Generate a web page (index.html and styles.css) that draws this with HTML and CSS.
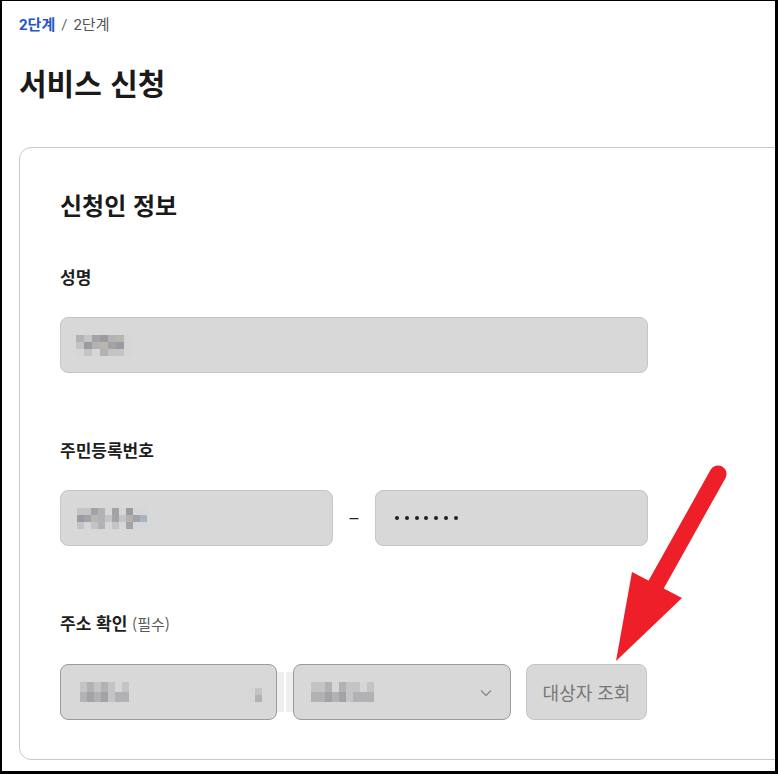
FILE: index.html
```html
<!DOCTYPE html>
<html lang="ko">
<head>
<meta charset="utf-8">
<title>서비스 신청</title>
<link rel="stylesheet" href="styles.css">
</head>
<body>
<div class="frame">
  <nav class="crumbs"><span class="crumb-current">2단계</span><span class="crumb-sep">/</span><span class="crumb">2단계</span></nav>
  <h1 class="title">서비스 신청</h1>
  <section class="card">
    <h2 class="card-title">신청인 정보</h2>

    <div class="field">
      <div class="label">성명</div>
      <div class="input input-full">
        <div class="mosaic m-name">
          <i class="c2"></i><i class="c1"></i><i class="c3"></i><i class="c4"></i><i class="c2"></i><i class="c5"></i><i class="c0"></i>
          <i class="c1"></i><i class="c4"></i><i class="c2"></i><i class="c5"></i><i class="c3"></i><i class="c4"></i><i class="c0"></i>
          <i class="c0"></i><i class="c1"></i><i class="c0"></i><i class="c2"></i><i class="c1"></i><i class="c1"></i><i class="c0"></i>
        </div>
      </div>
    </div>

    <div class="field">
      <div class="label">주민등록번호</div>
      <div class="row">
        <div class="input input-half">
          <div class="mosaic m-rrn">
            <i class="c1"></i><i class="c1"></i><i class="c3"></i><i class="c2"></i><i class="c0"></i><i class="c3"></i><i class="c0"></i><i class="c4"></i><i class="c0"></i><i class="c0"></i>
            <i class="c4"></i><i class="c3"></i><i class="c5"></i><i class="c2"></i><i class="c1"></i><i class="c3"></i><i class="c1"></i><i class="c2"></i><i class="c3"></i><i class="c6"></i>
            <i class="c1"></i><i class="c0"></i><i class="c1"></i><i class="c2"></i><i class="c0"></i><i class="c1"></i><i class="c0"></i><i class="c3"></i><i class="c0"></i><i class="c0"></i>
          </div>
        </div>
        <div class="dash">–</div>
        <div class="input input-half">
          <div class="dots"><i></i><i></i><i></i><i></i><i></i><i></i><i></i></div>
        </div>
      </div>
    </div>

    <div class="field">
      <div class="label">주소 확인 <span class="req">(필수)</span></div>
      <div class="row">
        <div class="input select select-a">
          <div class="mosaic m-sel1">
            <i class="c1"></i><i class="c2"></i><i class="c1"></i><i class="c2"></i><i class="c1"></i><i class="c0"></i><i class="c1"></i>
            <i class="c2"></i><i class="c3"></i><i class="c2"></i><i class="c3"></i><i class="c1"></i><i class="c2"></i><i class="c2"></i>
          </div>
          <div class="mosaic m-tail"><i class="c0"></i><i class="c1"></i><i class="c0"></i><i class="c2"></i></div>
        </div>
        <div class="spacer"><span></span><span></span></div>
        <div class="input select select-b">
          <div class="mosaic m-sel2">
            <i class="c1"></i><i class="c1"></i><i class="c2"></i><i class="c0"></i><i class="c2"></i><i class="c1"></i><i class="c1"></i><i class="c0"></i><i class="c1"></i>
            <i class="c2"></i><i class="c2"></i><i class="c3"></i><i class="c2"></i><i class="c3"></i><i class="c1"></i><i class="c2"></i><i class="c2"></i><i class="c2"></i>
          </div>
          <svg class="chev" width="12" height="8" viewBox="0 0 12 8"><path d="M1 1.5 L6 6.5 L11 1.5" fill="none" stroke="#8a8a8a" stroke-width="1.3"/></svg>
        </div>
        <button class="btn">대상자 조회</button>
      </div>
    </div>
  </section>

  <svg class="arrow" width="778" height="774" viewBox="0 0 778 774">
    <line x1="718" y1="474" x2="652" y2="592" stroke="#ee1f28" stroke-width="17" stroke-linecap="round"/>
    <polygon points="616,661 632,572 682,598" fill="#ee1f28"/>
  </svg>
</div>
</body>
</html>
```

FILE: styles.css
```css
html, body {
  margin: 0;
  padding: 0;
  background: #fff;
}

.frame {
  position: relative;
  width: 778px;
  height: 774px;
  box-sizing: border-box;
  border-style: solid;
  border-color: #000;
  border-width: 1px 3px 3px 2px;
  overflow: hidden;
  background: #fff;
  padding: 13px 0 0 17px;
  font-family: "Noto Sans CJK KR", "Noto Sans", sans-serif;
  color: #1e1e1e;
}

.crumbs {
  display: flex;
  align-items: center;
  height: 22px;
  font-size: 15px;
  line-height: 22px;
  font-family: "Roboto", "Noto Sans CJK KR", sans-serif;
}

.crumb-current {
  color: #2356c7;
  font-weight: 700;
}

.crumb-sep {
  color: #666;
  margin: 0 6px;
}

.crumb {
  color: #555;
}

.title {
  margin: 24px 0 0;
  font-size: 30px;
  line-height: 44px;
  font-weight: 700;
  color: #1a1a1a;
}

.card {
  margin-top: 43px;
  width: 800px;
  height: 613px;
  box-sizing: border-box;
  border: 1px solid #c9c9c9;
  border-radius: 12px;
  padding: 40px 0 0 40px;
  display: flex;
  flex-direction: column;
}

.card-title {
  margin: 0;
  font-size: 24px;
  line-height: 34px;
  font-weight: 700;
  color: #1a1a1a;
}

.field {
  margin-top: 43px;
  display: flex;
  flex-direction: column;
  gap: 28px;
}

.field + .field {
  margin-top: 65px;
}

.label {
  font-size: 17px;
  line-height: 24px;
  font-weight: 700;
  color: #1e1e1e;
}

.req {
  font-size: 15px;
  font-weight: 400;
  color: #5a5a5a;
}

.row {
  display: flex;
  align-items: center;
}

.input {
  box-sizing: border-box;
  height: 56px;
  background: #d8d8d8;
  border: 1px solid #c6c6c6;
  border-radius: 8px;
  display: flex;
  align-items: center;
  position: relative;
}

.input-full {
  width: 588px;
  padding-left: 15px;
}

.input-half {
  width: 273px;
  padding-left: 16px;
}

.dash {
  width: 42px;
  text-align: center;
  font-family: "Liberation Sans", sans-serif;
  font-size: 16px;
  line-height: 20px;
  color: #222;
}

.dots {
  display: flex;
  gap: 5.8px;
  margin-left: 3px;
}

.dots i {
  display: block;
  width: 4px;
  height: 4px;
  border-radius: 50%;
  background: #222;
}

.select {
  border-color: #9c9c9c;
}

.select-a {
  width: 217px;
  padding-left: 19px;
}

.select-b {
  width: 218px;
  padding-left: 17px;
}

.spacer {
  width: 16px;
  height: 40px;
  display: flex;
  justify-content: space-between;
}

.spacer span {
  display: block;
  width: 7px;
  height: 40px;
  background: #efefef;
}

.chev {
  position: absolute;
  right: 18px;
  top: 24px;
}

.btn {
  margin-left: 15px;
  width: 121px;
  height: 56px;
  box-sizing: border-box;
  background: #d8d8d8;
  border: 1px solid #c6c6c6;
  border-radius: 8px;
  font-family: "Noto Sans CJK KR", "Noto Sans", sans-serif;
  font-size: 18px;
  color: #777;
  padding: 0;
}

.mosaic {
  display: grid;
  grid-auto-rows: 7px;
}

.mosaic i {
  display: block;
}

.m-name {
  grid-template-columns: repeat(7, 8px);
}

.m-rrn {
  grid-template-columns: repeat(10, 7px);
}

.m-sel1 {
  grid-template-columns: repeat(7, 7px);
  grid-auto-rows: 10px;
}

.m-tail {
  position: absolute;
  left: 187px;
  top: 23px;
  grid-template-columns: repeat(2, 7px);
}

.m-sel2 {
  grid-template-columns: repeat(9, 7px);
  grid-auto-rows: 10px;
}

.c0 { background: #d6d6d8; }
.c1 { background: #c4c3c5; }
.c2 { background: #b3b1b4; }
.c3 { background: #a3a2a6; }
.c4 { background: #9c9ba2; }
.c5 { background: #b9b6ae; }
.c6 { background: #a6b3c1; }

.arrow {
  position: absolute;
  left: -2px;
  top: -1px;
  pointer-events: none;
}
```
